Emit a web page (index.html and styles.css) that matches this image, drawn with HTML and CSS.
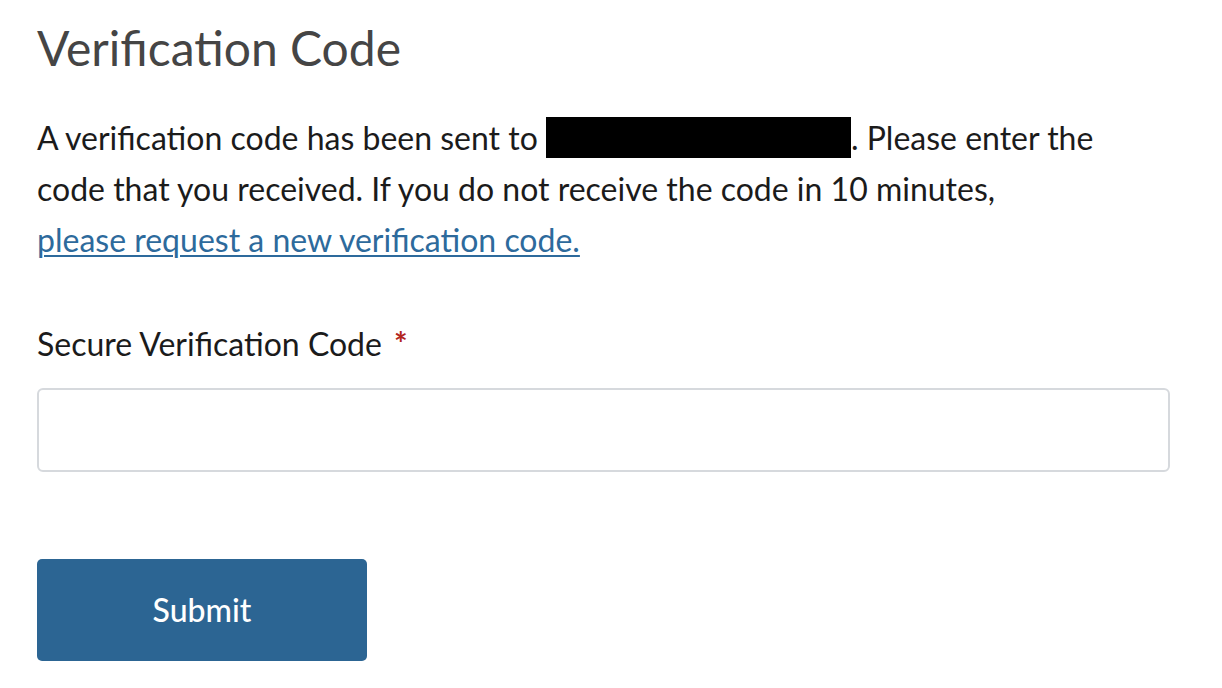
FILE: index.html
```html
<!DOCTYPE html>
<html lang="en">
<head>
    <meta charset="UTF-8">
    <meta name="viewport" content="width=device-width, initial-scale=1.0">
    <title>Verification Code</title>
    <link rel="stylesheet" href="styles.css">
</head>
<body>

    <div class="container">
        <h1 class="title">Verification Code</h1>
        <p class="intro">
            A verification code has been sent to <span class="redacted"></span>. Please enter the
            code that you received. If you do not receive the code in 10 minutes,
            <a href="#" class="resend">please request a new verification code.</a>
        </p>

        <form class="verify-form" onsubmit="return false;">
            <label for="codeInput" class="field-label">Secure Verification Code <span class="required">*</span></label>
            <input type="text" id="codeInput" class="code-input" autocomplete="one-time-code">
            <button type="submit" class="submit-btn">Submit</button>
        </form>
    </div>

</body>
</html>
```

FILE: styles.css
```css
body {
    margin: 0;
    font-family: Lato, "Open Sans", sans-serif;
    background: #fff;
    color: #1b1b1b;
}
.container {
    width: 1133px;
    padding: 0 37px;
}
.title {
    margin: 0;
    padding-top: 19px;
    font-size: 48px;
    font-weight: 400;
    line-height: 58px;
    color: #454545;
}
.intro {
    max-width: 1064px;
    margin: 35px 0 0;
    font-size: 32px;
    line-height: 51.2px;
}
.redacted {
    display: inline-block;
    width: 305px;
    height: 41px;
    background: #000;
    vertical-align: -8px;
}
.resend {
    display: inline-block;
    color: #2d6a9c;
    text-decoration: underline;
    text-decoration-thickness: 2px;
    text-underline-offset: 3px;
}
.verify-form {
    display: flex;
    flex-direction: column;
    align-items: flex-start;
    margin-top: 52px;
}
.field-label {
    font-size: 32px;
    line-height: 51.2px;
}
.required {
    color: #b3261e;
    font-weight: 700;
    margin-left: 4px;
}
.code-input {
    box-sizing: border-box;
    width: 100%;
    height: 84px;
    margin-top: 19px;
    border: 2px solid #d6d9dd;
    border-radius: 6px;
    font-size: 32px;
    padding: 0 16px;
}
.submit-btn {
    width: 330px;
    height: 102px;
    margin-top: 87px;
    background: #2c6593;
    color: #fff;
    border: none;
    border-radius: 5px;
    font-family: inherit;
    font-size: 32px;
    font-weight: 500;
    cursor: pointer;
}
```
